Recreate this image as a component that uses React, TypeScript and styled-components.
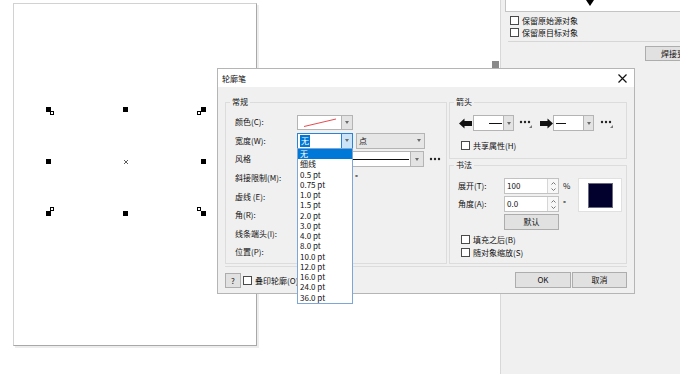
import React from "react";
import styled, { createGlobalStyle } from "styled-components";

const GlobalStyle = createGlobalStyle`
  html, body { margin: 0; padding: 0; background: #fff; }
  body {
    font-family: "Noto Sans CJK SC", "Microsoft YaHei", sans-serif;
    font-size: 8px;
    color: #111;
  }
  * { box-sizing: border-box; }
`;

const Screen = styled.div`
  position: relative;
  display: flex;
  width: 680px;
  height: 374px;
  overflow: hidden;
  background: #fff;
`;

/* ---------- drawing canvas ---------- */

const Workspace = styled.main`
  position: relative;
  flex: 1;
  padding: 3px 0 0 13px;
`;

const Paper = styled.div`
  position: relative;
  width: 244px;
  height: 343px;
  background: #fff;
  border: 1px solid #d2d2d2;
  border-right-color: #a8a8a8;
  border-bottom-color: #a8a8a8;
  box-shadow: 2px 2px 0 #ededed;
`;

const Handle = styled.span<{ $x: number; $y: number }>`
  position: absolute;
  left: ${(p) => p.$x}px;
  top: ${(p) => p.$y}px;
  width: 5px;
  height: 5px;
  background: #000;
`;

const Anchor = styled.span<{ $x: number; $y: number }>`
  position: absolute;
  left: ${(p) => p.$x}px;
  top: ${(p) => p.$y}px;
  width: 4px;
  height: 4px;
  border: 1px solid #000;
  background: #fff;
`;

const CenterMark = styled.svg`
  position: absolute;
  left: 110px;
  top: 156px;
`;

const ScrollNub = styled.span`
  position: absolute;
  left: 492px;
  top: 61px;
  width: 7px;
  height: 7px;
  background: #8a8a8a;
`;

/* ---------- docker on the right ---------- */

const Docker = styled.aside`
  width: 180px;
  flex: none;
  display: flex;
  flex-direction: column;
  padding-left: 4px;
  background: #f0f0f0;
  border-left: 1px solid #d8d8d8;
`;

const PreviewStrip = styled.div`
  height: 12px;
  padding-left: 80px;
  background: #fff;
  border-left: 1px solid #c4c4c4;
  border-bottom: 1px solid #c4c4c4;
`;

const BigCaret = styled.span`
  display: block;
  width: 0;
  height: 0;
  border-left: 4px solid transparent;
  border-right: 4px solid transparent;
  border-top: 6px solid #000;
`;

const DockerOptions = styled.div`
  padding: 2px 0 0 5px;
`;

const Separator = styled.div`
  margin: 2px 0 0 3px;
  border-top: 1px solid #d6d6d6;
`;

const WeldRow = styled.div`
  display: flex;
  margin: 4px 0 0 140px;
`;

const WeldButton = styled.button`
  flex: none;
  width: 60px;
  height: 15px;
  padding: 0 0 0 15px;
  font: inherit;
  line-height: 13px;
  text-align: left;
  color: #111;
  white-space: nowrap;
  background: #e1e1e1;
  border: 1px solid #adadad;
`;

/* ---------- common controls ---------- */

const CheckRow = styled.label<{ $h?: number }>`
  display: flex;
  align-items: center;
  gap: 3px;
  height: ${(p) => p.$h ?? 12.5}px;
  line-height: 11px;
  white-space: nowrap;
`;

const CheckBox = styled.span`
  flex: none;
  width: 9px;
  height: 9px;
  background: #fff;
  border: 1px solid #4a4a4a;
`;

const Caret = styled.span`
  display: block;
  width: 0;
  height: 0;
  border-left: 2.5px solid transparent;
  border-right: 2.5px solid transparent;
  border-top: 3px solid #6b6b6b;
`;

type Variant = "plain" | "focus" | "flat";

const ComboBox = styled.div<{ $w: number; $h?: number; $variant?: Variant }>`
  display: flex;
  width: ${(p) => p.$w}px;
  height: ${(p) => p.$h ?? 16}px;
  border: 1px solid ${(p) => (p.$variant === "focus" ? "#2a82da" : "#b4b4b4")};
  background: ${(p) => (p.$variant === "flat" ? "#e6e6e6" : "#fff")};
`;

const ComboField = styled.div<{ $align?: "start" | "end" }>`
  flex: 1;
  display: flex;
  align-items: center;
  justify-content: ${(p) => (p.$align === "end" ? "flex-end" : "flex-start")};
  padding: 0 1px 0 2px;
  overflow: hidden;
  line-height: 12px;
  white-space: nowrap;
`;

const ComboArrow = styled.div<{ $variant?: Variant; $w?: number }>`
  flex: none;
  width: ${(p) => p.$w ?? 11}px;
  display: flex;
  align-items: center;
  justify-content: center;
  background: ${(p) =>
    p.$variant === "focus" ? "#cce4f7" : p.$variant === "flat" ? "transparent" : "#e3e3e3"};
  border-left: 1px solid
    ${(p) => (p.$variant === "focus" ? "#2a82da" : p.$variant === "flat" ? "transparent" : "#b4b4b4")};
`;

const Selected = styled.span`
  padding: 0 1px;
  color: #fff;
  background: #0078d7;
`;

const LineSample = styled.span<{ $w?: number }>`
  display: block;
  width: ${(p) => (p.$w ? `${p.$w}px` : "100%")};
  height: 1px;
  background: #111;
`;

const Spinner = styled.div`
  display: flex;
  width: 55px;
  height: 16px;
  background: #fff;
  border: 1px solid #c2c2c2;
`;

const SpinValue = styled.div`
  flex: 1;
  padding-left: 2px;
  line-height: 14px;
`;

const SpinButtons = styled.div`
  width: 11px;
  display: flex;
  flex-direction: column;
  align-items: center;
  justify-content: center;
  gap: 3px;
  border-left: 1px solid #d6d6d6;
  background: #f7f7f7;
`;

const PushButton = styled.button<{ $w: number; $h?: number }>`
  width: ${(p) => p.$w}px;
  height: ${(p) => p.$h ?? 16}px;
  padding: 0;
  font: inherit;
  line-height: 14px;
  color: #111;
  background: #e1e1e1;
  border: 1px solid #adadad;
`;

/* ---------- dialog ---------- */

const Dialog = styled.section`
  position: absolute;
  left: 217px;
  top: 68px;
  width: 418px;
  height: 226px;
  display: flex;
  flex-direction: column;
  background: #f0f0f0;
  border: 1px solid #b5b5b5;
  z-index: 2;
`;

const TitleBar = styled.header`
  height: 18px;
  flex: none;
  display: flex;
  align-items: center;
  justify-content: space-between;
  padding: 1px 7px 0 4px;
  background: #fff;
  line-height: 18px;
`;

const DialogBody = styled.div`
  flex: 1;
  display: flex;
  flex-direction: column;
  padding: 9px 7px 0;
`;

const Columns = styled.div`
  display: flex;
  gap: 2px;
  height: 168px;
`;

const RightColumn = styled.div`
  display: flex;
  flex-direction: column;
`;

const Group = styled.fieldset<{ $w: number; $h: number }>`
  width: ${(p) => p.$w}px;
  height: ${(p) => p.$h}px;
  min-width: 0;
  margin: 0;
  padding: 0;
  border: 1px solid #dcdcdc;
`;

const Legend = styled.legend`
  margin-left: 4px;
  padding: 0 2px;
  line-height: 12px;
`;

const FieldGrid = styled.div`
  display: grid;
  grid-template-columns: 62px auto;
  grid-auto-rows: 18.57px;
  align-items: center;
  padding: 5px 0 0 9px;
`;

const FieldLabel = styled.span`
  line-height: 12px;
  white-space: nowrap;
`;

const Inline = styled.div<{ $gap?: number }>`
  display: flex;
  align-items: center;
  gap: ${(p) => p.$gap ?? 3}px;
`;

const ArrowRow = styled.div`
  display: grid;
  grid-template-columns: 14px 46px 21px 13px 47px 13px;
  align-items: center;
  height: 16px;
  margin: 7px 0 0 9px;
`;

const ShareRow = styled.div`
  margin: 9px 0 0 11px;
`;

const CalligraphyGrid = styled.div`
  display: grid;
  grid-template-columns: 46px 55px 19px 44px;
  grid-template-rows: 16px 16px 16px;
  row-gap: 2px;
  align-items: center;
  margin: 7px 0 0 8px;
`;

const Unit = styled.span`
  padding-left: 4px;
  line-height: 12px;
`;

const NibPreview = styled.div`
  grid-column: 4;
  grid-row: 1 / span 2;
  align-self: stretch;
  display: flex;
  align-items: center;
  justify-content: center;
  background: #fff;
  border: 1px solid #e0e0e0;
`;

const NibSwatch = styled.div`
  width: 25px;
  height: 25px;
  background: #02012e;
  border: 1px solid #6b6b80;
`;

const CalligraphyChecks = styled.div`
  margin: 3px 0 0 11px;
`;

const Footer = styled.footer`
  flex: 1;
  display: flex;
  align-items: center;
  margin-top: 2px;
  border-top: 1px solid #dcdcdc;
`;

const FooterCheck = styled.div`
  margin-left: 2px;
`;

const FooterButtons = styled.div`
  margin-left: auto;
  display: flex;
  gap: 1px;
`;

/* ---------- width dropdown ---------- */

const DropList = styled.ul`
  position: absolute;
  left: 297px;
  top: 148px;
  width: 56px;
  margin: 0;
  padding: 0;
  list-style: none;
  background: #fff;
  border: 1px solid #7ea6d8;
  z-index: 3;
`;

const DropItem = styled.li<{ $selected?: boolean }>`
  height: 10.27px;
  padding-left: 2px;
  line-height: 10.27px;
  white-space: nowrap;
  color: ${(p) => (p.$selected ? "#fff" : "#111")};
  background: ${(p) => (p.$selected ? "#0078d7" : "transparent")};
`;

/* ---------- small drawings ---------- */

const Dots = () => (
  <svg width="13" height="10" viewBox="0 0 13 10">
    <circle cx="2" cy="4" r="1.2" fill="#222" />
    <circle cx="6" cy="4" r="1.2" fill="#222" />
    <circle cx="10" cy="4" r="1.2" fill="#222" />
    <path d="M10 10 L13 10 L13 7 Z" fill="#777" />
  </svg>
);

const ArrowGlyph = ({ dir }: { dir: "left" | "right" }) => (
  <svg width="13" height="11" viewBox="0 0 13 11">
    <path
      d="M0 5.5 L5.5 0.5 V3 H13 V8 H5.5 V10.5 Z"
      fill="#111"
      transform={dir === "right" ? "translate(13 0) scale(-1 1)" : undefined}
    />
  </svg>
);

const SpinArrows = () => (
  <SpinButtons>
    <svg width="5" height="3" viewBox="0 0 5 3">
      <path d="M0.5 2.5 L2.5 0.5 L4.5 2.5" stroke="#777" fill="none" />
    </svg>
    <svg width="5" height="3" viewBox="0 0 5 3">
      <path d="M0.5 0.5 L2.5 2.5 L4.5 0.5" stroke="#777" fill="none" />
    </svg>
  </SpinButtons>
);

const widths = [
  "无", "细线", "0.5 pt", "0.75 pt", "1.0 pt", "1.5 pt", "2.0 pt", "3.0 pt",
  "4.0 pt", "8.0 pt", "10.0 pt", "12.0 pt", "16.0 pt", "24.0 pt", "36.0 pt",
];

const handles = [
  [32, 103], [109, 103], [187, 103],
  [32, 155], [187, 155],
  [32, 207], [109, 207], [187, 207],
];

const anchors = [
  [36, 107], [183, 107], [36, 203], [183, 203],
];

const App: React.FC = () => {
  return (
    <Screen>
      <GlobalStyle />
      <Workspace>
        <Paper>
          {anchors.map(([x, y]) => (
            <Anchor key={`a${x}-${y}`} $x={x} $y={y} />
          ))}
          {handles.map(([x, y]) => (
            <Handle key={`h${x}-${y}`} $x={x} $y={y} />
          ))}
          <CenterMark width="4" height="4" viewBox="0 0 4 4">
            <path d="M0 0 L4 4 M4 0 L0 4" stroke="#333" strokeWidth="0.8" />
          </CenterMark>
        </Paper>
        <ScrollNub />
      </Workspace>

      <Docker>
        <PreviewStrip>
          <BigCaret />
        </PreviewStrip>
        <DockerOptions>
          <CheckRow>
            <CheckBox />
            保留原始源对象
          </CheckRow>
          <CheckRow>
            <CheckBox />
            保留原目标对象
          </CheckRow>
        </DockerOptions>
        <Separator />
        <WeldRow>
          <WeldButton>焊接到</WeldButton>
        </WeldRow>
      </Docker>

      <Dialog>
        <TitleBar>
          <span>轮廓笔</span>
          <svg width="9" height="9" viewBox="0 0 9 9">
            <path d="M0.5 0.5 L8.5 8.5 M8.5 0.5 L0.5 8.5" stroke="#111" strokeWidth="1.2" />
          </svg>
        </TitleBar>
        <DialogBody>
          <Columns>
            <Group $w={222} $h={168}>
              <Legend>常规</Legend>
              <FieldGrid>
                <FieldLabel>颜色(C):</FieldLabel>
                <ComboBox $w={56} $h={15}>
                  <ComboField>
                    <svg width="40" height="13" viewBox="0 0 40 13">
                      <path d="M4 10.5 L36 3" stroke="#e8343a" strokeWidth="0.9" />
                    </svg>
                  </ComboField>
                  <ComboArrow>
                    <Caret />
                  </ComboArrow>
                </ComboBox>

                <FieldLabel>宽度(W):</FieldLabel>
                <Inline>
                  <ComboBox $w={56} $variant="focus">
                    <ComboField>
                      <Selected>无</Selected>
                    </ComboField>
                    <ComboArrow $variant="focus">
                      <Caret />
                    </ComboArrow>
                  </ComboBox>
                  <ComboBox $w={69} $variant="flat">
                    <ComboField>点</ComboField>
                    <ComboArrow $variant="flat">
                      <Caret />
                    </ComboArrow>
                  </ComboBox>
                </Inline>

                <FieldLabel>风格</FieldLabel>
                <Inline $gap={5}>
                  <ComboBox $w={127}>
                    <ComboField>
                      <LineSample />
                    </ComboField>
                    <ComboArrow $w={13}>
                      <Caret />
                    </ComboArrow>
                  </ComboBox>
                  <svg width="13" height="6" viewBox="0 0 13 6">
                    <circle cx="2" cy="3" r="1.2" fill="#222" />
                    <circle cx="6" cy="3" r="1.2" fill="#222" />
                    <circle cx="10" cy="3" r="1.2" fill="#222" />
                  </svg>
                </Inline>

                <FieldLabel>斜接限制(M):</FieldLabel>
                <Inline $gap={3}>
                  <Spinner>
                    <SpinValue />
                    <SpinArrows />
                  </Spinner>
                  <span>°</span>
                </Inline>

                <FieldLabel>虚线 (E):</FieldLabel>
                <span />
                <FieldLabel>角(R):</FieldLabel>
                <span />
                <FieldLabel>线条端头(I):</FieldLabel>
                <span />
                <FieldLabel>位置(P):</FieldLabel>
                <span />
              </FieldGrid>
            </Group>

            <RightColumn>
              <Group $w={178} $h={63}>
                <Legend>箭头</Legend>
                <ArrowRow>
                  <ArrowGlyph dir="left" />
                  <ComboBox $w={41}>
                    <ComboField $align="end">
                      <LineSample $w={13} />
                    </ComboField>
                    <ComboArrow $w={10}>
                      <Caret />
                    </ComboArrow>
                  </ComboBox>
                  <Dots />
                  <ArrowGlyph dir="right" />
                  <ComboBox $w={41}>
                    <ComboField>
                      <LineSample $w={10} />
                    </ComboField>
                    <ComboArrow $w={10}>
                      <Caret />
                    </ComboArrow>
                  </ComboBox>
                  <Dots />
                </ArrowRow>
                <ShareRow>
                  <CheckRow $h={10}>
                    <CheckBox />
                    共享属性(H)
                  </CheckRow>
                </ShareRow>
              </Group>

              <Group $w={178} $h={105}>
                <Legend>书法</Legend>
                <CalligraphyGrid>
                  <FieldLabel>展开(T):</FieldLabel>
                  <Spinner>
                    <SpinValue>100</SpinValue>
                    <SpinArrows />
                  </Spinner>
                  <Unit>%</Unit>
                  <NibPreview>
                    <NibSwatch />
                  </NibPreview>

                  <FieldLabel>角度(A):</FieldLabel>
                  <Spinner>
                    <SpinValue>0.0</SpinValue>
                    <SpinArrows />
                  </Spinner>
                  <Unit>°</Unit>

                  <span />
                  <PushButton $w={55}>默认</PushButton>
                </CalligraphyGrid>
                <CalligraphyChecks>
                  <CheckRow $h={13}>
                    <CheckBox />
                    填充之后(B)
                  </CheckRow>
                  <CheckRow $h={13}>
                    <CheckBox />
                    随对象缩放(S)
                  </CheckRow>
                </CalligraphyChecks>
              </Group>
            </RightColumn>
          </Columns>

          <Footer>
            <PushButton $w={16} $h={15}>?</PushButton>
            <FooterCheck>
              <CheckRow>
                <CheckBox />
                叠印轮廓(O)
              </CheckRow>
            </FooterCheck>
            <FooterButtons>
              <PushButton $w={56}>OK</PushButton>
              <PushButton $w={55}>取消</PushButton>
            </FooterButtons>
          </Footer>
        </DialogBody>
      </Dialog>

      <DropList>
        {widths.map((w, i) => (
          <DropItem key={w} $selected={i === 0}>
            {w}
          </DropItem>
        ))}
      </DropList>
    </Screen>
  );
};

export default App;
